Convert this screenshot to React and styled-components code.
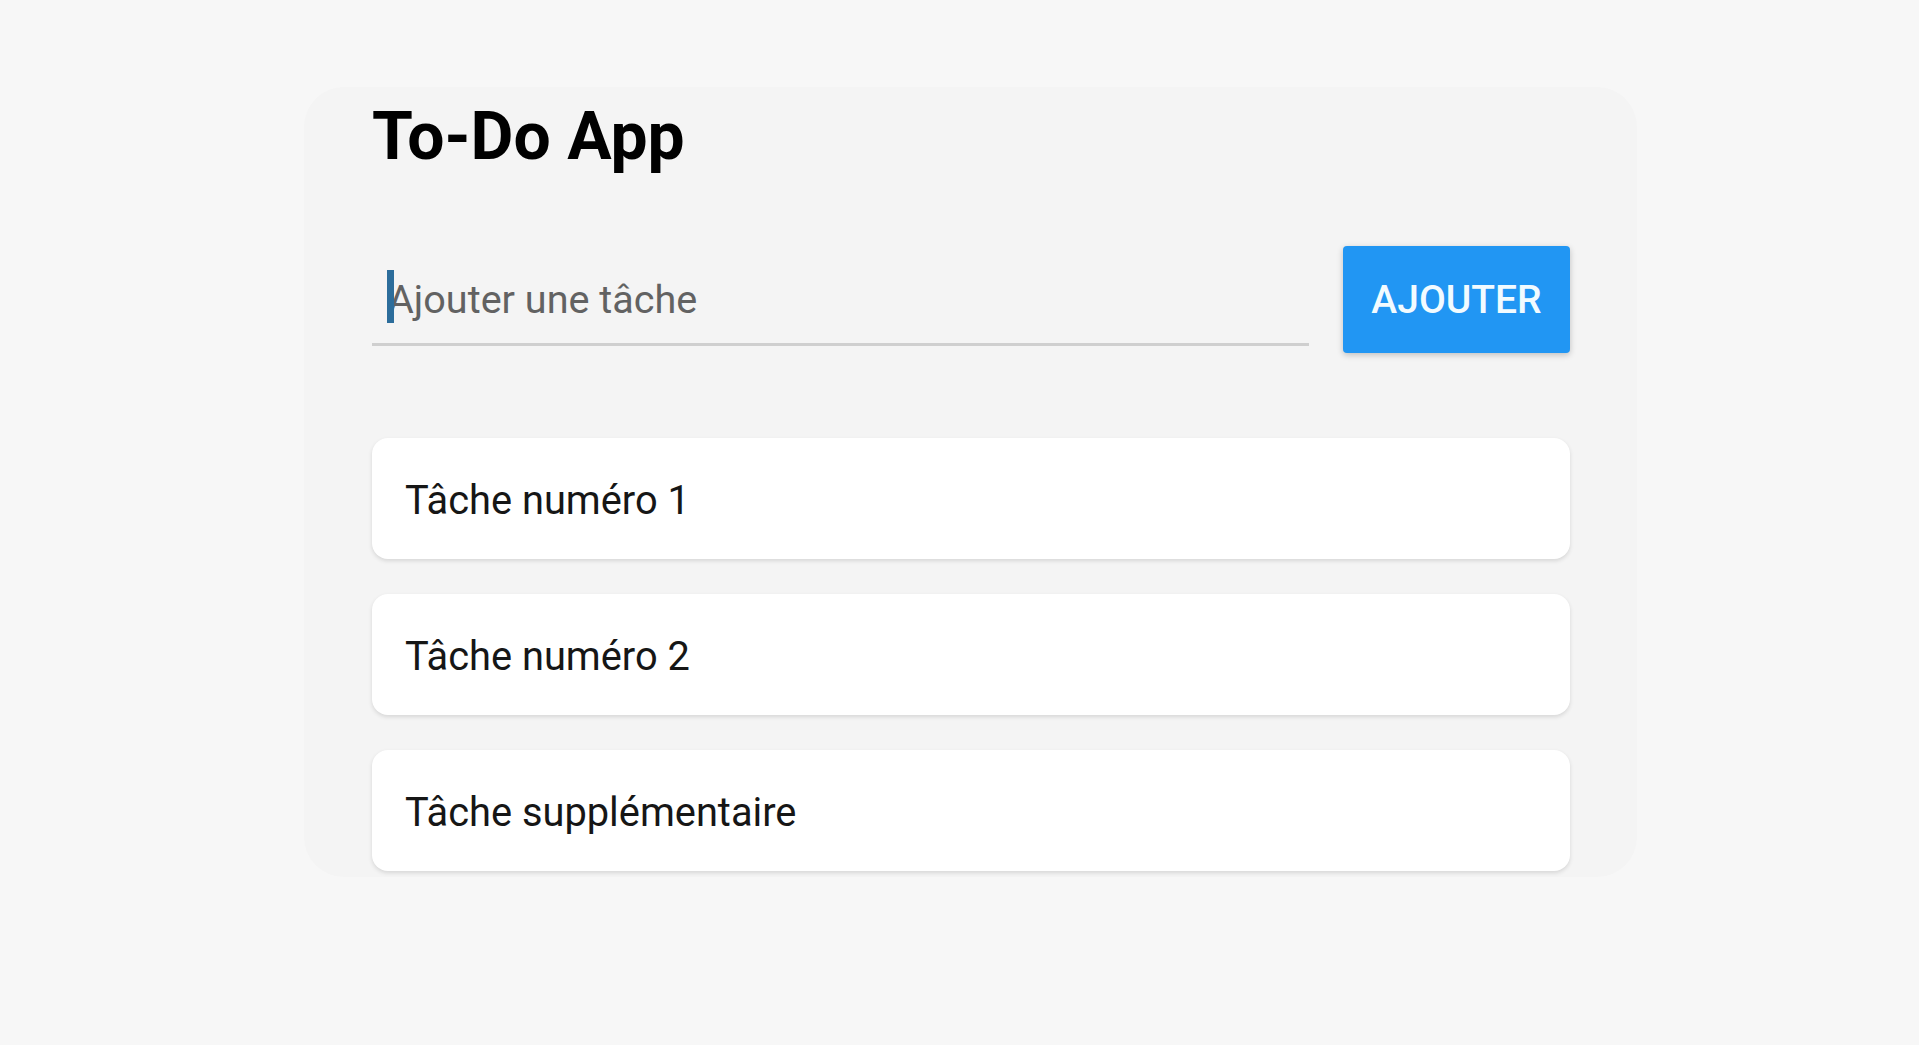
import React from 'react';
import styled, { createGlobalStyle } from 'styled-components';

const GlobalStyle = createGlobalStyle`
  html, body {
    margin: 0;
    padding: 0;
    background: #f7f7f7;
    font-family: Roboto, 'Noto Sans', Arial, sans-serif;
  }
`;

const Page = styled.div`
  min-height: 1045px;
  padding: 87px 0 0 304px;
  box-sizing: border-box;
`;

const Card = styled.div`
  width: 1333px;
  box-sizing: border-box;
  padding: 17px 67px 6px 68px;
  background: #f4f4f4;
  border-radius: 40px;
`;

const Title = styled.h1`
  margin: 0;
  font-size: 66px;
  line-height: 1;
  font-weight: 700;
  color: #000;
`;

const AddRow = styled.div`
  display: flex;
  align-items: center;
  gap: 34px;
  margin-top: 76px;
`;

const InputWrap = styled.div`
  position: relative;
  flex: 1;
`;

const TaskInput = styled.input`
  display: block;
  width: 100%;
  box-sizing: border-box;
  padding: 23px 16px 20px;
  border: none;
  border-bottom: 3px solid #cfcfcf;
  background: transparent;
  font-family: Roboto, Arial, sans-serif;
  font-size: 39.6px;
  line-height: normal;
  color: #222;
  outline: none;
  caret-color: transparent;

  &::placeholder {
    color: #626262;
  }
`;

/* the thick blue text cursor shown in the screenshot */
const Caret = styled.span`
  position: absolute;
  left: 15px;
  top: 17px;
  width: 7px;
  height: 53px;
  background: #2c6d9b;
  pointer-events: none;
`;

const AddButton = styled.button`
  width: 227px;
  height: 107px;
  border: none;
  border-radius: 4px;
  background: #2196f3;
  color: #f2fbff;
  font-family: Roboto, Arial, sans-serif;
  font-size: 39px;
  font-weight: 500;
  box-shadow: 0 2px 6px rgba(0, 0, 0, 0.22);
  cursor: pointer;
`;

const TaskList = styled.ul`
  list-style: none;
  margin: 85px 0 0;
  padding: 0;
  display: flex;
  flex-direction: column;
  gap: 35px;
`;

const TaskItem = styled.li`
  height: 121px;
  box-sizing: border-box;
  display: flex;
  align-items: center;
  padding: 3px 34px 0 33px;
  background: #fff;
  border-radius: 16px;
  box-shadow: 0 2px 4px rgba(0, 0, 0, 0.12);
  font-size: 39.8px;
  color: #161616;
`;

const tasks = ['Tâche numéro 1', 'Tâche numéro 2', 'Tâche supplémentaire'];

export default function App() {
  return (
    <>
      <GlobalStyle />
      <Page>
        <Card>
          <Title>To-Do App</Title>
          <AddRow>
            <InputWrap>
              <TaskInput placeholder="Ajouter une tâche" />
              <Caret />
            </InputWrap>
            <AddButton>AJOUTER</AddButton>
          </AddRow>
          <TaskList>
            {tasks.map((t) => (
              <TaskItem key={t}>{t}</TaskItem>
            ))}
          </TaskList>
        </Card>
      </Page>
    </>
  );
}
